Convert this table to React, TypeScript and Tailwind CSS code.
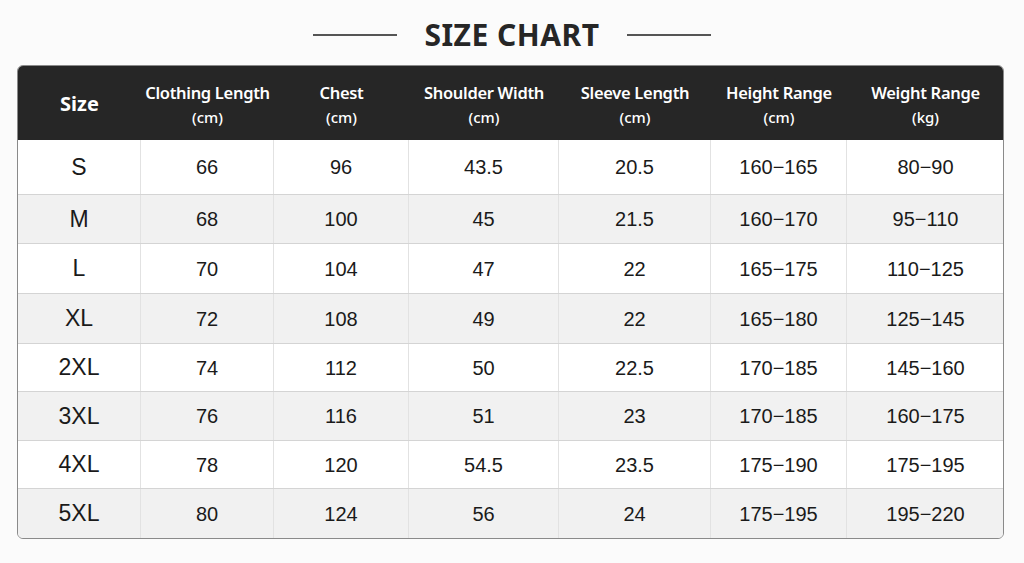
import React from 'react';

const columns = [
  { title: 'Clothing Length', unit: '(cm)' },
  { title: 'Chest', unit: '(cm)' },
  { title: 'Shoulder Width', unit: '(cm)' },
  { title: 'Sleeve Length', unit: '(cm)' },
  { title: 'Height Range', unit: '(cm)' },
  { title: 'Weight Range', unit: '(kg)' },
];

const rows: Array<{ size: string; values: string[]; h: string }> = [
  { size: 'S', values: ['66', '96', '43.5', '20.5', '160−165', '80−90'], h: 'h-[54px]' },
  { size: 'M', values: ['68', '100', '45', '21.5', '160−170', '95−110'], h: 'h-[49px]' },
  { size: 'L', values: ['70', '104', '47', '22', '165−175', '110−125'], h: 'h-[50px]' },
  { size: 'XL', values: ['72', '108', '49', '22', '165−180', '125−145'], h: 'h-[50px]' },
  { size: '2XL', values: ['74', '112', '50', '22.5', '170−185', '145−160'], h: 'h-[48px]' },
  { size: '3XL', values: ['76', '116', '51', '23', '170−185', '160−175'], h: 'h-[49px]' },
  { size: '4XL', values: ['78', '120', '54.5', '23.5', '175−190', '175−195'], h: 'h-[48px]' },
  { size: '5XL', values: ['80', '124', '56', '24', '175−195', '195−220'], h: 'h-[50px]' },
];

const grid = 'grid grid-cols-[123px_133px_135px_150px_152px_136px_157px]';

export default function App() {
  return (
    <div className="w-[1024px] h-[563px] bg-[#fbfbfb] font-['Liberation_Sans',Arial,sans-serif] text-[#1a1a1a] overflow-hidden">
      <div className="flex items-center justify-center h-[65px] pt-[4px]">
        <div className="w-[84px] h-[2px] bg-[#555]" />
        <h1 className="mx-[27px] font-['Noto_Sans',sans-serif] font-bold text-[30px] tracking-[0.5px] text-[#262626] leading-none">
          SIZE CHART
        </h1>
        <div className="w-[84px] h-[2px] bg-[#555]" />
      </div>

      <div className="ml-[17px] w-[987px] rounded-[6px] border border-[#8a8a8a] overflow-hidden">
        <div className={`${grid} h-[74px] bg-[#262626] text-white font-['Noto_Sans',sans-serif] font-semibold`}>
          <div className="flex items-center justify-center text-[20px] font-bold pt-[2px]">Size</div>
          {columns.map(c => (
            <div key={c.title} className="flex flex-col items-center justify-center leading-[25px] pt-[4px]">
              <div className="text-[16.5px] tracking-[-0.3px]">{c.title}</div>
              <div className="text-[15px] font-medium">{c.unit}</div>
            </div>
          ))}
        </div>
        {rows.map((r, i) => (
          <div
            key={r.size}
            className={`${grid} ${r.h} ${i % 2 === 0 ? 'bg-white' : 'bg-[#f1f1f1]'} ${i > 0 ? 'border-t border-[#d4d4d4]' : ''}`}
          >
            <div className="flex items-center justify-center text-[23px] border-r border-[#e2e2e2]">{r.size}</div>
            {r.values.map((v, j) => (
              <div
                key={j}
                className={`flex items-center justify-center text-[20px] ${j < r.values.length - 1 ? 'border-r border-[#e2e2e2]' : ''}`}
              >
                {v}
              </div>
            ))}
          </div>
        ))}
      </div>
    </div>
  );
}
